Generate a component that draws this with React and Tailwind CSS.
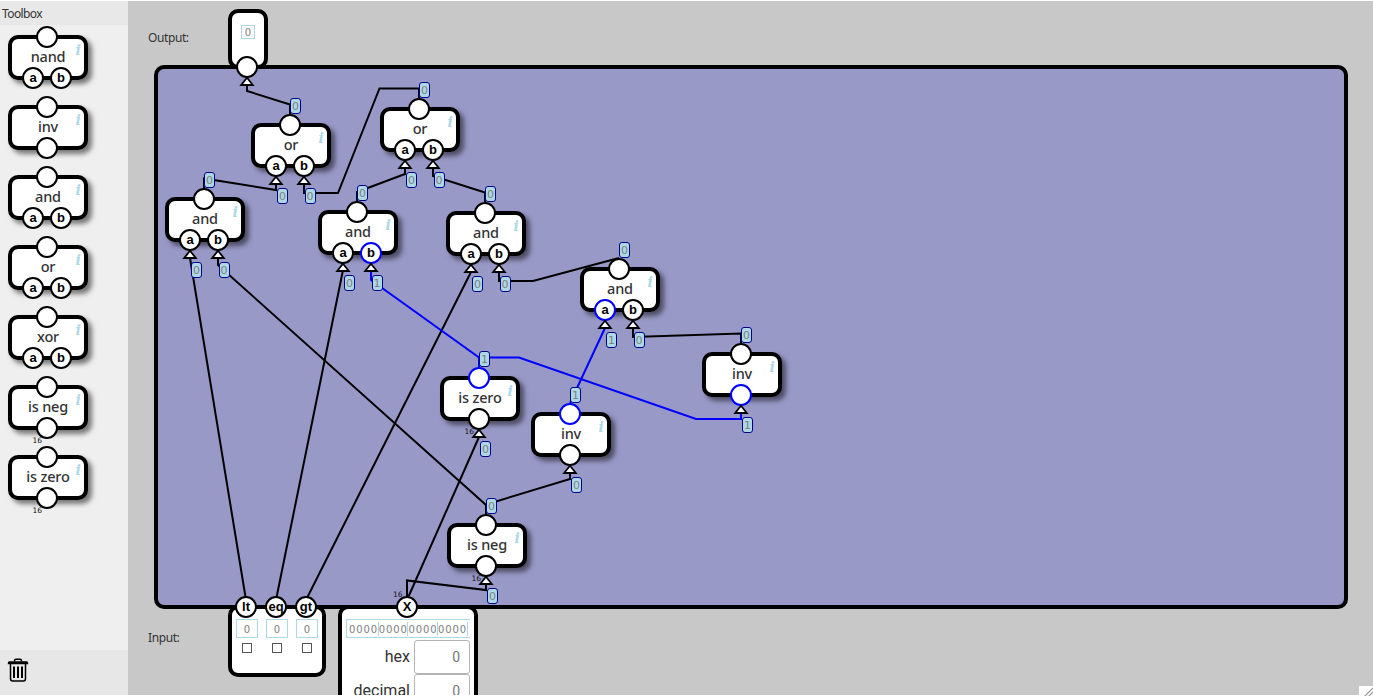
import React from "react";

const TOOLS = [
  { name: "nand", inputs: ["a", "b"] },
  { name: "inv", inputs: [""] },
  { name: "and", inputs: ["a", "b"] },
  { name: "or", inputs: ["a", "b"] },
  { name: "xor", inputs: ["a", "b"] },
  { name: "is neg", inputs: [""], wide: true },
  { name: "is zero", inputs: [""], wide: true },
];

// Nodes on the free canvas; bits are the signal values, output first.
const NODES = [
  { name: "or", x: 251, y: 123, inputs: ["a", "b"], bits: [0, 0, 0] },
  { name: "or", x: 380, y: 107, inputs: ["a", "b"], bits: [0, 0, 0] },
  { name: "and", x: 165, y: 197, inputs: ["a", "b"], bits: [0, 0, 0] },
  { name: "and", x: 318, y: 210, inputs: ["a", "b"], bits: [0, 0, 1] },
  { name: "and", x: 446, y: 211, inputs: ["a", "b"], bits: [0, 0, 0] },
  { name: "and", x: 580, y: 267, inputs: ["a", "b"], bits: [0, 1, 0] },
  { name: "inv", x: 702, y: 352, inputs: [""], bits: [0, 1] },
  { name: "is zero", x: 440, y: 376, inputs: [""], bits: [1, 0], wide: true },
  { name: "inv", x: 531, y: 412, inputs: [""], bits: [1, 0] },
  { name: "is neg", x: 447, y: 523, inputs: [""], bits: [0, 0], wide: true },
];

const WIRES = [
  "247,84 247,91 290,104.5 290,116",
  "276,184 276,190 204,178.5 204,190",
  "304,184 304,193 338,193 379.5,88.5 419,88.5 419,100",
  "405,168 405,174 357,192 357,204",
  "433,168 433,176 485,192.5 485,204",
  "190,258 246,600",
  "218,258 218,265 486,505 486,516",
  "343,270 276,600",
  "471,272 306,600",
  "499,272 499,281 533,281 619,258",
  "633,328 633,337 741,333.5 741,345",
  "479,437 407,600",
  "570,473 570,479 486,504.5",
  "486,584 486,590 407,580.5 407,600",
];

const LIVE_WIRES = [
  "371,271 371,280 479,357.5 479,370",
  "479,357.5 519,357.5 696,419 741,419 741,413",
  "605,328 570,403",
];

function Port({ label = "", on = false, className = "", style }) {
  return (
    <div
      style={style}
      className={`absolute flex h-[22px] w-[22px] items-center justify-center rounded-full border-2 bg-white pb-px font-['Liberation_Sans',sans-serif] text-[13px] font-bold leading-none text-black ${on ? "border-[#0000ff]" : "border-black"} ${className}`}
    >
      {label}
    </div>
  );
}

function Badge({ value, style }) {
  return (
    <div
      style={style}
      className="absolute flex h-4 w-[11px] items-center justify-center rounded-[3px] border border-[#00008b] bg-[#add8e6] font-['DejaVu_Sans',sans-serif] text-[11px] leading-none text-[#808080]"
    >
      {value}
    </div>
  );
}

function Arrow({ style, className = "" }) {
  return (
    <svg style={style} className={`absolute h-[11px] w-4 ${className}`} viewBox="0 0 16 11">
      <path d="M8 1.8 L13.8 9 H2.2 Z" fill="#fff" stroke="#000" strokeWidth="1.8" />
    </svg>
  );
}

function Block({ name, inputs, wide, bits }) {
  const lefts = inputs.length === 2 ? [14, 42] : [28];
  return (
    <div className="relative h-[45px] w-20">
      <div className="flex h-[45px] w-20 items-center justify-center rounded-[10px] border-4 border-black bg-white pb-[2px] font-['Noto_Sans',sans-serif] text-[14.5px] font-medium leading-none tracking-[-0.2px] text-[#333] shadow-[4px_4px_5px_rgba(0,0,0,0.5)]">
        <span className="whitespace-nowrap">{name}</span>
      </div>
      <span className="absolute left-[67.5px] top-[8px] font-['DejaVu_Serif',serif] text-[14px] font-bold italic leading-none text-[#add8e6]">
        i
      </span>
      <Port className="left-[28px] top-[-9px]" on={bits?.[0] === 1} />
      {inputs.map((label, i) => (
        <Port key={i} label={label} className="top-[32px]" style={{ left: lefts[i] }} on={bits?.[i + 1] === 1} />
      ))}
      {wide && (
        <span className="absolute left-[24.5px] top-[52px] font-['DejaVu_Sans',sans-serif] text-[7.5px] leading-none text-[#111]">
          16
        </span>
      )}
      {bits && (
        <>
          <Badge value={bits[0]} style={{ left: 39, top: -25 }} />
          {inputs.map((_, i) => (
            <React.Fragment key={i}>
              <Arrow style={{ left: lefts[i] + 3, top: 52 }} />
              <Badge value={bits[i + 1]} style={{ left: lefts[i] + (i === 0 ? 12 : 11.5), top: 65 }} />
            </React.Fragment>
          ))}
        </>
      )}
    </div>
  );
}

function Bit() {
  return (
    <div className="flex h-[19px] w-[22px] items-center justify-center border border-[#add8e6] pt-0.5 font-['DejaVu_Sans',sans-serif] text-[10px] leading-none text-[#808080]">
      0
    </div>
  );
}

function NumberRow({ label }) {
  return (
    <div className="flex h-[34px] items-center justify-end gap-1">
      <span className="pb-px font-['Roboto',sans-serif] text-[16px] leading-none text-[#333]">{label}</span>
      <div className="flex h-[34px] w-14 items-center justify-end rounded-[3px] border border-[#b4b4b4] bg-white pr-[9px] font-['Roboto',sans-serif] text-[14px] leading-none text-[#777]">
        0
      </div>
    </div>
  );
}

function Trash() {
  return (
    <svg className="h-[26px] w-[22px]" viewBox="0 0 22 26">
      <path d="M7.5 4.5 V3.8 Q7.5 2.2 9 2.2 H13 Q14.5 2.2 14.5 3.8 V4.5" fill="none" stroke="#000" strokeWidth="1.5" />
      <path d="M2 4.3 H20 Q21.3 4.3 21.3 7.3 H.7 Q.7 4.3 2 4.3 Z" fill="#000" />
      <path d="M3.5 7 V21.5 Q3.5 24 5.5 24 H16.5 Q18.5 24 18.5 21.5 V7" fill="none" stroke="#000" strokeWidth="1.5" />
      <path d="M7 9.5 V21 M11 9.5 V21 M15 9.5 V21" stroke="#000" strokeWidth="2" />
    </svg>
  );
}

function Toolbox() {
  return (
    <aside className="flex w-32 shrink-0 flex-col bg-[#efefef]">
      <h1 className="flex h-6 items-center bg-[#e8e8e8] pl-0.5 pt-px font-['Noto_Sans',sans-serif] text-[12px] font-normal leading-none tracking-[-0.6px] text-[#333]">
        Toolbox
      </h1>
      <div className="flex flex-1 flex-col gap-[25px] pl-2 pt-[10px]">
        {TOOLS.map((t) => (
          <Block key={t.name} {...t} />
        ))}
      </div>
      <div className="h-[45px] bg-[#e7e7e7] pl-[7px] pt-[7px]">
        <Trash />
      </div>
    </aside>
  );
}

function Caption({ children }) {
  return (
    <div className="w-[100px] pl-5 font-['Noto_Sans',sans-serif] text-[12px] leading-4 tracking-[-0.4px] text-[#333]">
      {children}
    </div>
  );
}

export default function App() {
  return (
    <div className="relative flex h-[696px] w-[1373px] overflow-hidden bg-white py-px">
      <Toolbox />
      <main className="flex flex-1 flex-col overflow-hidden bg-[#c8c8c8]">
        <section className="flex h-16 shrink-0 items-start pt-2">
          <div className="pt-[21px]">
            <Caption>Output:</Caption>
          </div>
          <div className="z-10 flex h-[60px] w-10 justify-center rounded-[10px] border-4 border-black bg-white pt-3">
            <div className="flex h-[14px] w-[14px] items-center justify-center border border-[#add8e6] pt-0.5 font-['DejaVu_Sans',sans-serif] text-[10px] leading-none text-[#808080]">
              0
            </div>
          </div>
        </section>
        <section className="ml-[26px] h-[544px] w-[1194px] shrink-0 rounded-[10px] border-4 border-black bg-[#9999c8]" />
        <section className="z-10 -mt-1 flex shrink-0 items-start">
          <div className="pt-[25px]">
            <Caption>Input:</Caption>
          </div>
          <div className="flex h-[72px] w-[98px] gap-2 rounded-[10px] border-4 border-black bg-white pl-1 pt-[10px]">
            {["lt", "eq", "gt"].map((n) => (
              <div key={n} className="flex w-[22px] flex-col items-center gap-[5px]">
                <Bit />
                <div className="h-[10px] w-[10px] border border-[#555] bg-white" />
              </div>
            ))}
          </div>
          <div className="ml-3 flex h-[180px] w-[140px] flex-col rounded-[10px] border-4 border-black bg-white pl-1 pr-1 pt-[10px]">
            <div className="mb-0.5 flex h-[19px] w-[124px] items-center border border-r-0 border-[#add8e6] pl-0.5 font-['DejaVu_Sans',sans-serif] text-[10px] leading-none tracking-[0.9px] text-[#808080]">
              {[0, 1, 2, 3].map((g) => (
                <span key={g} className="flex h-[14px] w-[29.7px] shrink-0 items-center border-r border-[#add8e6] pt-0.5">
                  0000
                </span>
              ))}
            </div>
            <div className="flex w-[124px] flex-col">
              <NumberRow label="hex" />
              <NumberRow label="decimal" />
            </div>
          </div>
        </section>
      </main>

      <div className="absolute inset-0 z-20">
        <svg className="absolute inset-0" width="1373" height="696" fill="none" strokeWidth="2">
          {WIRES.map((p) => (
            <polyline key={p} points={p} stroke="#000" />
          ))}
          {LIVE_WIRES.map((p) => (
            <polyline key={p} points={p} stroke="#0000ff" />
          ))}
        </svg>
        {NODES.map((n) => (
          <div key={`${n.x}-${n.y}`} className="absolute" style={{ left: n.x, top: n.y }}>
            <Block {...n} />
          </div>
        ))}
        <Port className="left-[236px] top-[56px]" />
        <Arrow className="left-[239px] top-[76px]" />
        <Port className="left-[235px] top-[596px]" label="lt" />
        <Port className="left-[265px] top-[596px]" label="eq" />
        <Port className="left-[295px] top-[596px]" label="gt" />
        <Port className="left-[396px] top-[596px]" label="X" />
        <span className="absolute left-[393px] top-[591px] font-['DejaVu_Sans',sans-serif] text-[7.5px] leading-none text-[#111]">
          16
        </span>
        <svg className="absolute bottom-0 right-0 h-[10px] w-[14px] bg-white" viewBox="0 0 14 10">
          <path d="M5 11 L14 2 M9 11 L14 6" stroke="#999" strokeWidth="1.2" />
        </svg>
      </div>
    </div>
  );
}
